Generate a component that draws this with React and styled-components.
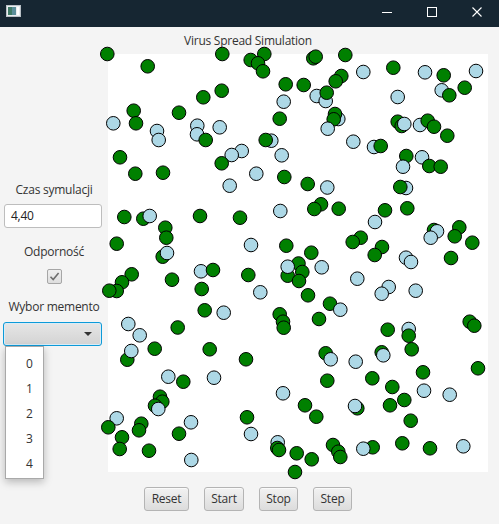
import React from 'react';
import styled, { createGlobalStyle } from 'styled-components';

const GlobalStyle = createGlobalStyle`
  html, body {
    margin: 0;
    padding: 0;
    background: #f4f4f4;
    overflow: hidden;
  }
  * {
    box-sizing: border-box;
  }
`;

// circles of the simulation: [x, y, kind] in page coordinates
const PEOPLE = [
  [107.3, 54, 'g'], [147.7, 66.3, 'g'], [222.3, 54, 'g'], [250.7, 60, 'g'], [264.3, 54, 'g'],
  [258, 63.3, 'g'], [263, 71.3, 'g'], [285.7, 84.3, 'g'], [221.7, 90.7, 'g'], [203.3, 97.3, 'g'],
  [283.7, 101.7, 'b'], [133.7, 110.7, 'g'], [179, 112.7, 'g'], [113.3, 123.3, 'b'], [136, 123.3, 'g'],
  [279.7, 118.7, 'g'], [157, 131, 'b'], [158.7, 140, 'b'], [197.3, 125.7, 'b'], [197, 134.3, 'b'],
  [205.7, 140, 'g'], [219.7, 127.3, 'b'], [271.3, 140.7, 'b'], [265.7, 140, 'g'], [281.7, 155.3, 'b'],
  [120, 157.3, 'g'], [241.7, 151, 'b'], [231.7, 155, 'b'], [221.7, 163.3, 'g'], [135.3, 173.7, 'g'],
  [163, 172.7, 'g'], [256.3, 173.7, 'b'], [284.3, 177, 'g'], [229.7, 185.7, 'b'],
  [313.3, 58.3, 'g'], [315.7, 56.7, 'g'], [345.3, 55, 'g'], [303.7, 85, 'g'], [363.3, 72, 'b'],
  [393.3, 67.7, 'g'], [425, 72.3, 'b'], [443.7, 75.3, 'g'], [476, 71, 'b'], [341.3, 76, 'g'],
  [335.7, 81.3, 'g'], [316.7, 96, 'b'], [325.7, 101, 'b'], [326.7, 92.7, 'g'], [441.7, 90.3, 'b'],
  [449.3, 95.3, 'g'], [464.7, 87.7, 'g'], [397.7, 97, 'b'], [338.3, 119, 'b'], [335, 114, 'g'],
  [333.7, 119.3, 'g'], [327.7, 128.7, 'b'], [397.7, 121.7, 'g'], [401.7, 126, 'g'], [404.3, 124, 'b'],
  [420, 125, 'b'], [427.7, 120.7, 'g'], [434, 126.7, 'g'], [447.3, 135.7, 'g'], [353.3, 141.7, 'b'],
  [374, 147, 'b'], [380.7, 146, 'g'], [406.3, 156, 'g'], [422, 157.3, 'b'], [403, 166.7, 'b'],
  [429.3, 166, 'g'], [440.7, 166.7, 'g'], [307.7, 184, 'g'], [327.3, 187.5, 'b'], [406, 188, 'b'],
  [400.3, 187, 'g'],
  [124.3, 217, 'g'], [143.3, 218.7, 'g'], [149.7, 216, 'b'], [200, 216, 'g'], [240, 217.7, 'g'],
  [280.3, 211, 'b'], [165.3, 227.7, 'g'], [166.3, 237.7, 'g'], [116.7, 243.7, 'g'], [251, 245, 'b'],
  [286.3, 245.7, 'g'], [162.7, 256.7, 'g'], [167, 253, 'b'], [298.5, 263.5, 'g'], [287.7, 275.7, 'g'],
  [287.7, 266.7, 'b'], [302.3, 272, 'g'], [299, 281, 'g'], [131.7, 274.3, 'g'], [122, 282.3, 'g'],
  [116.7, 291, 'g'], [109.3, 290.7, 'g'], [172, 279.7, 'g'], [201, 271.3, 'b'], [213, 270, 'g'],
  [248.3, 275, 'g'], [201.7, 289, 'g'], [260.3, 292.3, 'b'], [204.7, 310.3, 'g'], [223.7, 312.7, 'b'],
  [279.7, 314.3, 'g'], [283, 321.7, 'g'], [283.7, 327.7, 'g'], [128.3, 324, 'b'], [177.7, 327.5, 'g'],
  [321, 204.3, 'g'], [314.3, 209, 'g'], [338.7, 208.7, 'g'], [385, 210.3, 'g'], [407.3, 208.3, 'g'],
  [375, 222, 'b'], [360.7, 237.7, 'g'], [352.7, 242, 'g'], [382, 247, 'g'], [374.7, 255, 'g'],
  [311.3, 252.7, 'g'], [434, 230, 'g'], [437, 231.3, 'b'], [430.7, 237.7, 'b'], [459.3, 227.3, 'g'],
  [454.7, 236.3, 'g'], [472.3, 242.7, 'g'], [451, 258, 'g'], [406, 257.7, 'b'], [411, 262, 'b'],
  [321.7, 267.3, 'b'], [357.3, 278.7, 'b'], [388.7, 287, 'b'], [381.7, 293.7, 'b'], [415.7, 290.7, 'b'],
  [308, 295.3, 'g'], [330, 303.7, 'g'], [340.3, 309.7, 'b'], [319, 319, 'g'], [387.7, 329.7, 'g'],
  [469.7, 321.7, 'g'], [474.3, 325.7, 'g'], [408.7, 329, 'b'],
  [139.7, 335.3, 'b'], [154.7, 348.7, 'g'], [209.7, 349.3, 'g'], [127.3, 359.7, 'g'], [131.3, 351, 'b'],
  [246, 359.3, 'g'], [168.3, 376.7, 'b'], [183.3, 381.7, 'g'], [214, 377.7, 'b'], [283, 393.3, 'b'],
  [160, 396.7, 'g'], [162.3, 401.7, 'g'], [155, 405.7, 'g'], [158.3, 409, 'b'], [116.7, 418.3, 'b'],
  [108.3, 427.3, 'g'], [122, 437.3, 'g'], [119.7, 449, 'g'], [141.3, 423.7, 'g'], [139, 430.3, 'g'],
  [149, 450.7, 'g'], [179, 433.7, 'g'], [191, 422.3, 'b'], [191.3, 460, 'b'], [247, 417.3, 'g'],
  [251, 434, 'b'], [277.7, 442.3, 'b'], [277.3, 448, 'g'], [279, 450, 'g'], [296.7, 453.3, 'g'],
  [295, 472, 'g'], [408.7, 335.7, 'g'], [411.7, 349.3, 'g'], [325.7, 353.3, 'g'], [330.7, 359.3, 'b'],
  [355.7, 361.7, 'b'], [381.7, 352.3, 'g'], [383.3, 355.3, 'b'], [478, 368.3, 'g'], [327.3, 380.7, 'g'],
  [372.3, 378.3, 'g'], [423, 372.3, 'g'], [392.3, 387, 'g'], [424, 390.7, 'b'], [449.7, 394.7, 'b'],
  [404.3, 400, 'g'], [305, 405.3, 'g'], [316.3, 416.7, 'g'], [357.3, 408.3, 'g'], [355, 406, 'b'],
  [390, 405.3, 'g'], [410.7, 420.7, 'g'], [333, 445, 'g'], [338.3, 451.7, 'g'], [340.3, 457, 'g'],
  [372.7, 447.3, 'g'], [363.3, 448.7, 'b'], [402.3, 443.3, 'g'], [430, 448.3, 'g'], [463.3, 446.3, 'b'],
  [311.7, 459.3, 'g'],
];

const CANVAS_X = 108;
const CANVAS_Y = 54;

const App = () => {
  return (
    <>
      <GlobalStyle />
      <Window>
        <TitleBar>
          <AppIcon viewBox='0 0 15 12'>
            <rect x='0.5' y='0.5' width='14' height='11' fill='#e9edf0' stroke='#b9c0c6' />
            <rect x='2' y='2' width='8' height='8' fill='#5b8e9a' />
            <rect x='2' y='2' width='4' height='8' fill='#3f7a66' />
            <rect x='11' y='2' width='2' height='8' fill='#ffffff' />
          </AppIcon>
          <WinControls>
            <WinButton>
              <svg width='10' height='10' viewBox='0 0 10 10'>
                <line x1='0' y1='5.5' x2='10' y2='5.5' stroke='#ffffff' strokeWidth='1' />
              </svg>
            </WinButton>
            <WinButton>
              <svg width='10' height='10' viewBox='0 0 10 10'>
                <rect x='0.5' y='0.5' width='9' height='9' fill='none' stroke='#ffffff' strokeWidth='1' />
              </svg>
            </WinButton>
            <WinButton>
              <svg width='10' height='10' viewBox='0 0 10 10'>
                <path d='M0.5 0.5 L9.5 9.5 M9.5 0.5 L0.5 9.5' stroke='#ffffff' strokeWidth='1.1' />
              </svg>
            </WinButton>
          </WinControls>
        </TitleBar>

        <Content>
          <Header>Virus Spread Simulation</Header>
          <Middle>
            <SidePanel>
              <FieldLabel>Czas symulacji</FieldLabel>
              <TextField>4,40</TextField>
              <FieldLabel $top={16}>Odporność</FieldLabel>
              <CheckBox>
                <svg width='11' height='11' viewBox='0 0 11 11'>
                  <path d='M1.5 5.8 L4.2 8.6 L9.6 2' fill='none' stroke='#6d6d6d' strokeWidth='1.6' />
                </svg>
              </CheckBox>
              <FieldLabel $top={15}>Wybor memento</FieldLabel>
              <ComboWrap>
                <ComboBox>
                  <Arrow />
                </ComboBox>
                <Popup>
                  {[0, 1, 2, 3, 4].map((n) => (
                    <PopupItem key={n}>{n}</PopupItem>
                  ))}
                </Popup>
              </ComboWrap>
            </SidePanel>
            <Canvas>
              <svg width='380' height='418' style={{ overflow: 'visible', display: 'block' }}>
                {PEOPLE.map(([x, y, k], i) => (
                  <circle
                    key={i}
                    cx={x - CANVAS_X}
                    cy={y - CANVAS_Y}
                    r='6.8'
                    fill={k === 'g' ? '#008000' : '#add8e6'}
                    stroke='#000000'
                    strokeWidth='1'
                  />
                ))}
              </svg>
            </Canvas>
          </Middle>
          <Footer>
            <Button $w={45}>Reset</Button>
            <Button $w={40}>Start</Button>
            <Button $w={39}>Stop</Button>
            <Button $w={39}>Step</Button>
          </Footer>
        </Content>
      </Window>
    </>
  );
};

export default App;

const Window = styled.div`
  width: 499px;
  height: 524px;
  display: flex;
  flex-direction: column;
  font-family: 'Open Sans', 'Noto Sans', sans-serif;
  font-size: 12px;
  letter-spacing: -0.25px;
  color: #333333;
`;

// title bar
const TitleBar = styled.div`
  height: 27px;
  flex-shrink: 0;
  background: #162632;
  display: flex;
  align-items: center;
  justify-content: space-between;
  padding-left: 6px;
`;

const AppIcon = styled.svg`
  width: 15px;
  height: 12px;
  margin-top: -5px;
`;

const WinControls = styled.div`
  display: flex;
  height: 100%;
`;

const WinButton = styled.div`
  width: 45px;
  height: 100%;
  display: flex;
  align-items: center;
  justify-content: center;
  padding-bottom: 4px;
`;

const Content = styled.div`
  flex: 1;
  display: flex;
  flex-direction: column;
  position: relative;
`;

const Header = styled.div`
  height: 27px;
  text-align: center;
  padding-right: 3px;
  line-height: 28px;
`;

const Middle = styled.div`
  height: 418px;
  display: flex;
`;

const SidePanel = styled.div`
  width: 108px;
  flex-shrink: 0;
  display: flex;
  flex-direction: column;
  align-items: center;
  padding-top: 128px;
`;

const FieldLabel = styled.div`
  height: 16px;
  line-height: 16px;
  margin-top: ${(p) => p.$top || 0}px;
  white-space: nowrap;
`;

const TextField = styled.div`
  margin-top: 6px;
  width: 98px;
  height: 24px;
  background: #ffffff;
  border: 1px solid #bdbdbd;
  border-radius: 3px;
  padding-left: 6px;
  line-height: 22px;
  color: #222222;
  align-self: flex-start;
  margin-left: 4px;
`;

const CheckBox = styled.div`
  margin-top: 9px;
  width: 15px;
  height: 15px;
  border: 1px solid #a6a6a6;
  border-radius: 2px;
  background: linear-gradient(#efefef, #dedede);
  display: flex;
  align-items: center;
  justify-content: center;
`;

const ComboWrap = styled.div`
  position: relative;
  margin-top: 7px;
  align-self: flex-start;
  margin-left: 3px;
`;

const ComboBox = styled.div`
  width: 99px;
  height: 24px;
  border: 1px solid #0d9ad8;
  border-radius: 3px;
  background: linear-gradient(#e6e6e6, #d3d3d3);
  box-shadow: inset 0 0 0 1px #d8ecf7;
  position: relative;
`;

const Arrow = styled.div`
  position: absolute;
  right: 9px;
  top: 9px;
  width: 0;
  height: 0;
  border-left: 4px solid transparent;
  border-right: 4px solid transparent;
  border-top: 4px solid #333333;
`;

// dropdown of the combo box
const Popup = styled.div`
  position: absolute;
  top: 24px;
  left: 2px;
  width: 39px;
  height: 133px;
  background: #ffffff;
  border: 1px solid #a9a9a9;
  box-shadow: 0 3px 8px rgba(0, 0, 0, 0.25);
  padding-top: 4px;
  z-index: 10;
`;

const PopupItem = styled.div`
  height: 25px;
  line-height: 25px;
  padding-left: 20px;
  color: #333333;
`;

const Canvas = styled.div`
  width: 380px;
  height: 418px;
  background: #ffffff;
`;

const Footer = styled.div`
  flex: 1;
  display: flex;
  justify-content: center;
  gap: 15px;
  padding-top: 15px;
  padding-right: 3px;
`;

const Button = styled.div`
  width: ${(p) => p.$w}px;
  height: 24px;
  border: 1px solid #b4b4b4;
  border-radius: 3px;
  background: linear-gradient(#f2f2f2, #dcdcdc);
  box-shadow: inset 0 1px 0 #fafafa;
  text-align: center;
  line-height: 22px;
  color: #333333;
`;
